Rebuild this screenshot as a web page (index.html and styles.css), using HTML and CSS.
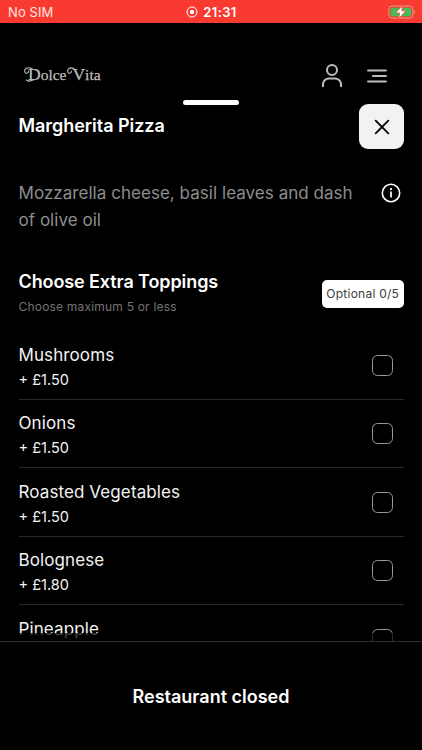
FILE: index.html
```html
<!DOCTYPE html>
<html lang="en">
<head>
<meta charset="utf-8">
<title>Dolce Vita</title>
<link rel="stylesheet" href="styles.css">
</head>
<body>
<div class="app">
  <div class="status">
    <span class="carrier">No SIM</span>
    <span class="clock">
      <svg width="12" height="12" viewBox="0 0 12 12"><circle cx="6" cy="6" r="5" fill="none" stroke="#fff" stroke-width="1"/><circle cx="6" cy="6" r="2.2" fill="#fff"/></svg>
      <span class="time">21:31</span>
    </span>
    <svg class="battery" width="28" height="16" viewBox="0 0 28 16"><rect x=".9" y="2" width="24" height="12" rx="3.2" fill="none" stroke="#d9a092" stroke-width="1"/><rect x="2.6" y="3.7" width="20.6" height="8.6" rx="1.8" fill="#43bd55"/><path d="M26.1 6.3q2 1.6 0 3.4z" fill="#d9a092"/><path d="M14.600 1.700 7.400 8.900h4.200l-.7 5.500 7-7.600h-4.100z" fill="#fff" stroke="#f83b31" stroke-width=".7"/></svg>
  </div>
  <header class="header">
    <span class="logo">
      <span class="word"><span class="cap">D</span>olce</span><span class="word word-v"><span class="cap">V</span>ita</span>
      <svg class="swash" width="80" height="20" viewBox="0 0 80 20" fill="none" stroke="#bdbdbd" stroke-width="1.100" stroke-linecap="round"><path d="M8 3.600C3.500 1.500 0 3.800.800 6.800c.7 2.300 4 1.800 3.500-.8M2.500 15q2.500 2.500 7-.5"/><path d="M50 3.600c-4.500-2-7 .5-6.200 3.200.7 2.300 4 1.800 3.500-.8"/></svg>
    </span>
    <svg class="user" width="24" height="26" viewBox="0 0 24 26" fill="none" stroke="#bdbdbd" stroke-width="2" stroke-linecap="butt"><circle cx="12" cy="7" r="5"/><path d="M3 24v-2.500a6 6 0 0 1 6-6h6a6 6 0 0 1 6 6V24"/></svg>
    <svg class="menu" width="22" height="16" viewBox="0 0 22 16" fill="none" stroke="#bdbdbd" stroke-width="2" stroke-linecap="round"><path d="M2 2.500h18M7 8h13M2 13.500h18"/></svg>
  </header>
  <main class="sheet">
    <div class="handle"></div>
    <div class="title-row">
      <h1 class="title">Margherita Pizza</h1>
      <button class="close" aria-label="Close"><svg width="18" height="18" viewBox="0 0 18 18" stroke="#050505" stroke-width="1.9" stroke-linecap="round"><path d="m2.700 2.700 12.600 12.600M15.300 2.700l-12.600 12.600"/></svg></button>
    </div>
    <div class="desc-row">
      <p class="desc">Mozzarella cheese, basil leaves and dash<br>of olive oil</p>
      <svg class="info" width="20" height="20" viewBox="0 0 20 20"><circle cx="10" cy="10" r="8.700" fill="none" stroke="#fff" stroke-width="1.600"/><circle cx="10" cy="6.100" r="1.150" fill="#fff"/><path d="M10 8.600v6" stroke="#fff" stroke-width="1.700"/></svg>
    </div>
    <div class="group">
      <div>
        <h2 class="group-title">Choose Extra Toppings</h2>
        <p class="hint">Choose maximum 5 or less</p>
      </div>
      <span class="badge">Optional 0/5</span>
    </div>
    <ul class="options">
      <li class="option"><div><div class="name">Mushrooms</div><div class="price">+ £1.50</div></div><span class="check"></span></li>
      <li class="option"><div><div class="name">Onions</div><div class="price">+ £1.50</div></div><span class="check"></span></li>
      <li class="option"><div><div class="name">Roasted Vegetables</div><div class="price">+ £1.50</div></div><span class="check"></span></li>
      <li class="option"><div><div class="name">Bolognese</div><div class="price">+ £1.80</div></div><span class="check"></span></li>
      <li class="option"><div><div class="name">Pineapple</div></div><span class="check"></span></li>
    </ul>
    <div class="fade"></div>
  </main>
  <footer class="footer"><span class="closed">Restaurant closed</span></footer>
</div>
</body>
</html>
```
FILE: styles.css
```css
* { box-sizing: border-box; margin: 0; padding: 0; }
body { background: #000; color: #fff; font-family: Inter, "Liberation Sans", sans-serif; }
.app { width: 422px; height: 750px; overflow: hidden; display: flex; flex-direction: column; }
svg { display: block; flex: none; }
.status { flex: none; height: 23px; background: #f93a30; display: grid; grid-template-columns: 1fr auto 1fr; align-items: center; padding: 0 6px 0 8px; }
.carrier { font-size: 13px; letter-spacing: .1px; color: #ffe6e2; line-height: 24px; }
.clock { display: flex; align-items: center; gap: 5px; margin-left: -1px; }
.time { font-size: 13px; font-weight: 600; line-height: 24px; letter-spacing: .4px; }
.battery { justify-self: end; }
.header { flex: none; height: 77px; padding: 40px 34px 0 24px; display: flex; align-items: flex-start; }
.logo { position: relative; display: flex; height: 24px; width: 80px; color: #bdbdbd; font: 15.500px/23px "Liberation Serif", serif; margin-right: auto; -webkit-text-stroke: .25px #bdbdbd; }
.cap { font-size: 17.500px; }
.word { padding-left: 4px; }
.word-v { padding-left: 6px; }
.swash { position: absolute; left: 0; top: 2px; }
.user { margin-right: 22px; }
.menu { margin-top: 5px; }
.sheet { position: relative; flex: none; height: 541px; overflow: hidden; padding: 0 18px 0 18.500px; }
.handle { width: 56px; height: 5px; border-radius: 3px; background: #fff; margin: 0 auto; }
.title-row { height: 45px; margin-top: -1px; display: flex; justify-content: space-between; align-items: center; }
.title { font-size: 18px; line-height: 24px; font-weight: 600; letter-spacing: -.05px; margin-top: -2px; }
.close { width: 45px; height: 45px; border: 0; border-radius: 9px; background: #f2f2f2; display: grid; place-items: center; }
.desc-row { display: flex; justify-content: space-between; padding: 30px 3px 0 0; height: 114px; }
.desc { margin-top: 1px; font-size: 17px; line-height: 27px; letter-spacing: .04px; color: #8e8e8e; white-space: nowrap; }
.info { margin-top: 4px; }
.group { display: flex; justify-content: space-between; height: 68px; padding-top: 6px; }
.group-title { font-size: 18px; line-height: 26px; font-weight: 600; letter-spacing: -.1px; }
.hint { font-size: 12px; line-height: 24px; letter-spacing: .2px; color: #747474; }
.badge { margin-top: 11px; width: 82.500px; height: 28px; background: #fff; border-radius: 5px; color: #3c3c3c; font-size: 12px; line-height: 28px; text-align: center; white-space: nowrap; letter-spacing: .25px; }
.options { list-style: none; }
.option { height: 68.500px; border-bottom: 1px solid #292929; display: flex; justify-content: space-between; padding: 10.500px 11.500px 0 0; }
.name { font-size: 17px; line-height: 26px; letter-spacing: .1px; color: #f3f3f3; }
.price { font-size: 14.500px; line-height: 24px; color: #f3f3f3; }
.check { width: 21px; height: 21px; border: 1px solid #999; border-radius: 5.500px; margin-top: 13px; }
.fade { position: absolute; left: 0; right: 0; bottom: 0; height: 8px; background: rgba(0,0,0,.72); }
.footer { flex: 1; border-top: 1px solid #303030; display: flex; justify-content: center; align-items: center; padding-top: 1px; }
.closed { font-size: 18px; line-height: 24px; font-weight: 600; }
```
